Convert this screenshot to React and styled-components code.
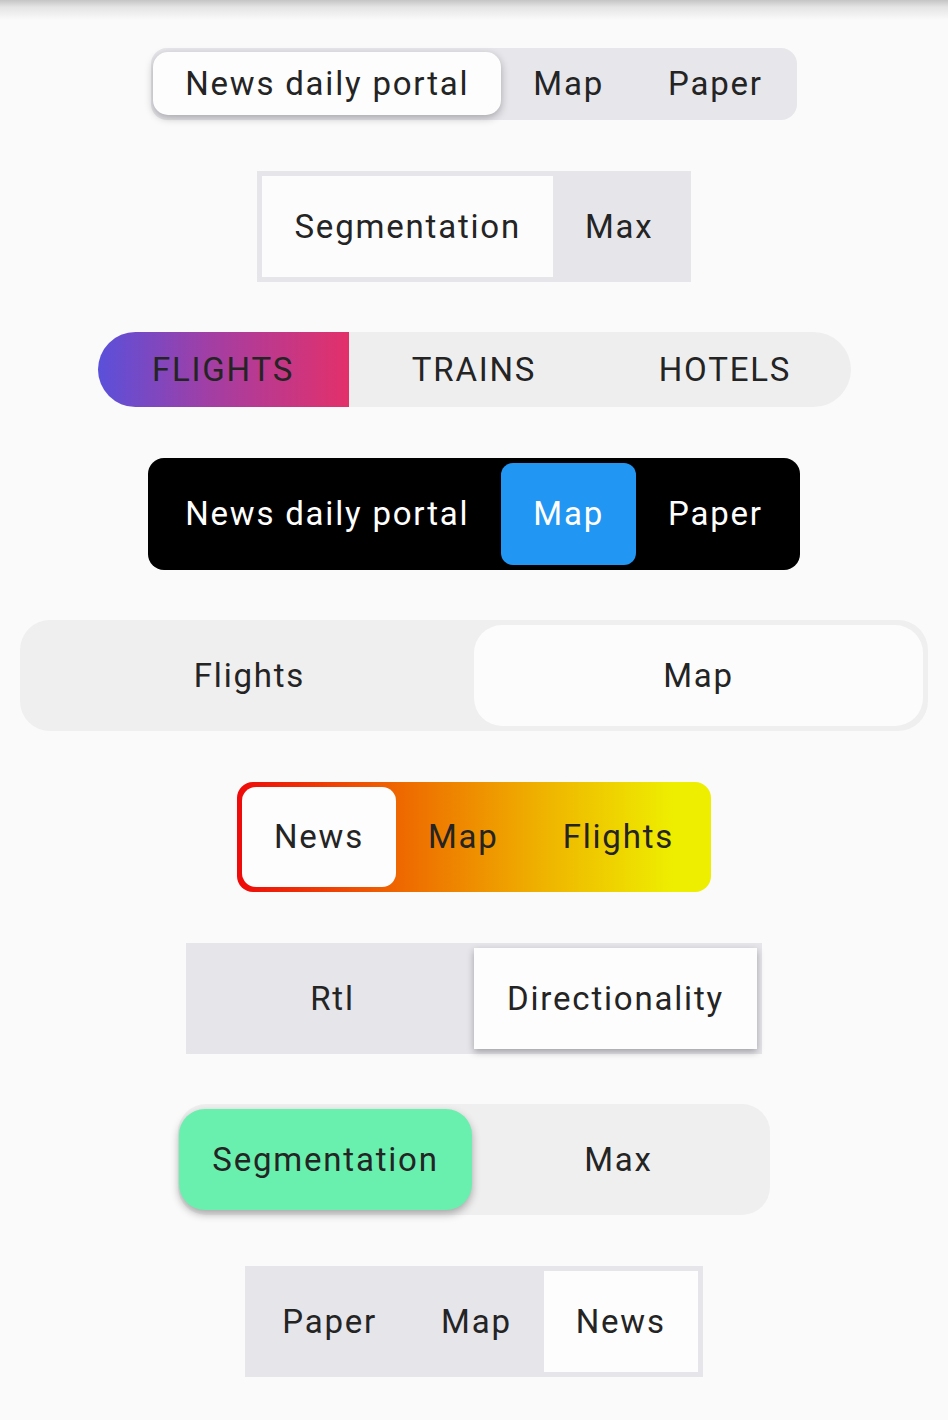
import React from 'react';
import styled, { createGlobalStyle, css } from 'styled-components';

const GlobalStyle = createGlobalStyle`
  html, body {
    margin: 0;
    padding: 0;
    background: #fafafa;
  }
  body {
    font-family: Roboto, "Noto Sans", "Liberation Sans", sans-serif;
  }
`;

const controls = [
  {
    items: ['News daily portal', 'Map', 'Paper'],
    active: 0,
    bg: '#e6e6eb',
    radius: '16px',
    pad: '4px 2px 5px 2px',
    height: 72,
    thumb: { bg: '#fdfdfd', radius: '15px', shadow: '0 3px 8px rgba(0,0,0,0.28)' },
  },
  {
    items: ['Segmentation', 'Max'],
    active: 0,
    bg: '#e6e6ea',
    radius: '0',
    pad: '5px',
    height: 111,
    thumb: { bg: '#fcfcfc', radius: '0' },
  },
  {
    items: ['FLIGHTS', 'TRAINS', 'HOTELS'],
    active: 0,
    bg: '#eeeeee',
    radius: '38px',
    pad: '0',
    height: 75,
    equal: 251,
    thumb: {
      bg: 'linear-gradient(90deg, #5a50da 0%, #a33ea4 45%, #e3306a 100%)',
      radius: '38px 0 0 38px',
    },
  },
  {
    items: ['News daily portal', 'Map', 'Paper'],
    active: 1,
    bg: '#000000',
    radius: '16px',
    pad: '5px',
    height: 112,
    color: '#ffffff',
    thumb: { bg: '#2196f3', radius: '12px' },
  },
  {
    items: ['Flights', 'Map'],
    active: 1,
    bg: '#efefef',
    radius: '30px',
    pad: '5px',
    height: 111,
    equal: 449,
    thumb: { bg: '#fcfcfc', radius: '28px' },
  },
  {
    items: ['News', 'Map', 'Flights'],
    active: 0,
    bg: 'linear-gradient(90deg, #ee0a0a 0%, #ee6a00 35%, #efb400 65%, #eeee00 92%)',
    radius: '16px',
    pad: '5px',
    height: 110,
    thumb: { bg: '#fdfdfd', radius: '14px' },
  },
  {
    items: ['Rtl', 'Directionality'],
    active: 1,
    bg: '#e6e5ea',
    radius: '0',
    pad: '5px',
    height: 111,
    equal: 283,
    thumb: { bg: '#fdfdfd', radius: '0', shadow: '0 3px 7px rgba(0,0,0,0.3)' },
  },
  {
    items: ['Segmentation', 'Max'],
    active: 0,
    bg: '#efefef',
    radius: '28px',
    pad: '5px 5px 5px 1px',
    height: 111,
    equal: 293,
    thumb: { bg: '#69f0ae', radius: '26px', shadow: '0 4px 9px rgba(0,0,0,0.3)' },
  },
  {
    items: ['Paper', 'Map', 'News'],
    active: 2,
    bg: '#e6e5ea',
    radius: '0',
    pad: '5px',
    height: 111,
    thumb: { bg: '#fdfdfd', radius: '0' },
  },
];

const SegmentedControl = ({ config }) => {
  const { items, active, bg, radius, pad, height, equal, color, thumb } = config;
  return (
    <Track $bg={bg} $radius={radius} $pad={pad} $height={height}>
      {items.map((label, i) => (
        <Segment
          key={label}
          $active={i === active}
          $width={equal}
          $color={color}
          $thumb={thumb}
        >
          {label}
        </Segment>
      ))}
    </Track>
  );
};

const App = () => {
  return (
    <>
      <GlobalStyle />
      <Page>
        <TopShade />
        <List>
          {controls.map((c, i) => (
            <SegmentedControl key={i} config={c} />
          ))}
        </List>
      </Page>
    </>
  );
};

export default App;

const Page = styled.div`
  width: 948px;
  min-height: 1420px;
  background: #fafafa;
`;

const TopShade = styled.div`
  height: 20px;
  background: linear-gradient(180deg, #c4c4c4 0%, #e4e4e4 35%, #fafafa 100%);
`;

const List = styled.div`
  display: flex;
  flex-direction: column;
  align-items: center;
  gap: 50.6px;
  padding-top: 28px;
`;

const Track = styled.div`
  display: inline-flex;
  box-sizing: border-box;
  height: ${({ $height }) => $height}px;
  padding: ${({ $pad }) => $pad};
  background: ${({ $bg }) => $bg};
  border-radius: ${({ $radius }) => $radius};
`;

const Segment = styled.div`
  display: flex;
  align-items: center;
  justify-content: center;
  box-sizing: border-box;
  padding: 0 32px;
  font-size: 33px;
  letter-spacing: 1.8px;
  white-space: nowrap;
  color: ${({ $color }) => $color || '#242424'};
  ${({ $width }) =>
    $width &&
    css`
      width: ${$width}px;
      padding: 0;
    `};
  ${({ $active, $thumb }) =>
    $active &&
    css`
      background: ${$thumb.bg};
      border-radius: ${$thumb.radius};
      box-shadow: ${$thumb.shadow || 'none'};
      position: relative;
      z-index: 1;
    `};
`;
